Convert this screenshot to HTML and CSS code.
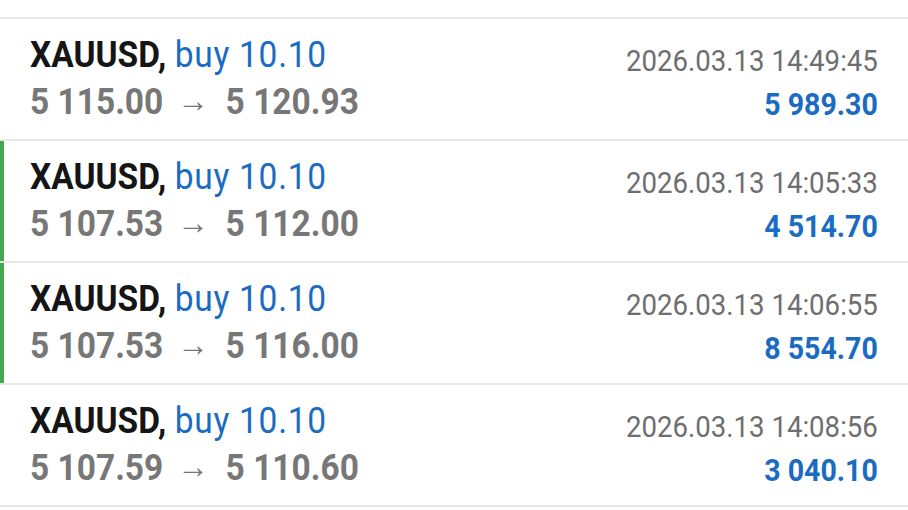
FILE: index.html
```html
<!DOCTYPE html>
<html lang="en">
<head>
    <meta charset="UTF-8">
    <meta name="viewport" content="width=device-width, initial-scale=1.0">
    <title>History</title>
    <link rel="stylesheet" href="styles.css">
</head>
<body>
    <ul class="deals">
        <li class="deal">
            <div class="deal-left">
                <div class="deal-title"><span class="symbol">XAUUSD,</span> <span class="side">buy 10.10</span></div>
                <div class="deal-prices">5 115.00<span class="arrow">→</span>5 120.93</div>
            </div>
            <div class="deal-right">
                <div class="deal-time">2026.03.13 14:49:45</div>
                <div class="deal-profit">5 989.30</div>
            </div>
        </li>
        <li class="deal marked">
            <div class="deal-left">
                <div class="deal-title"><span class="symbol">XAUUSD,</span> <span class="side">buy 10.10</span></div>
                <div class="deal-prices">5 107.53<span class="arrow">→</span>5 112.00</div>
            </div>
            <div class="deal-right">
                <div class="deal-time">2026.03.13 14:05:33</div>
                <div class="deal-profit">4 514.70</div>
            </div>
        </li>
        <li class="deal marked">
            <div class="deal-left">
                <div class="deal-title"><span class="symbol">XAUUSD,</span> <span class="side">buy 10.10</span></div>
                <div class="deal-prices">5 107.53<span class="arrow">→</span>5 116.00</div>
            </div>
            <div class="deal-right">
                <div class="deal-time">2026.03.13 14:06:55</div>
                <div class="deal-profit">8 554.70</div>
            </div>
        </li>
        <li class="deal">
            <div class="deal-left">
                <div class="deal-title"><span class="symbol">XAUUSD,</span> <span class="side">buy 10.10</span></div>
                <div class="deal-prices">5 107.59<span class="arrow">→</span>5 110.60</div>
            </div>
            <div class="deal-right">
                <div class="deal-time">2026.03.13 14:08:56</div>
                <div class="deal-profit">3 040.10</div>
            </div>
        </li>
    </ul>
</body>
</html>
```

FILE: styles.css
```css
body {
    margin: 0;
    background: #fff;
    font-family: Roboto, "Liberation Sans", sans-serif;
}

.deals {
    list-style: none;
    margin: 17px 0 0;
    padding: 0;
    border-top: 2px solid #e8e8e8;
}

.deal {
    display: flex;
    justify-content: space-between;
    height: 120px;
    padding: 0 30px;
    border-bottom: 2px solid #e8e8e8;
}

.deal.marked {
    box-shadow: inset 4px 0 0 #43a84e;
}

/* the app's font is a bit narrower than Roboto */
.deal-left {
    padding-top: 14px;
    line-height: 45px;
    font-size: 36px;
    white-space: nowrap;
    transform: scaleX(0.93);
    transform-origin: left top;
}

.deal-title .symbol {
    color: #151515;
    font-weight: bold;
}

.deal-title .side {
    color: #1a6cc2;
    letter-spacing: 0.8px;
}

.deal-prices {
    color: #777;
    font-weight: bold;
}

.deal-prices .arrow {
    font-size: 34px;
    font-weight: normal;
    vertical-align: 2px;
    margin: 0 18px 0 15px;
}

.deal-right {
    padding-top: 20px;
    line-height: 44px;
    text-align: right;
    white-space: nowrap;
    transform: scaleX(0.92);
    transform-origin: right top;
}

.deal-time {
    color: #6e6e6e;
    font-size: 30px;
}

.deal-profit {
    color: #1a6cc2;
    font-size: 31px;
    font-weight: bold;
}
```
